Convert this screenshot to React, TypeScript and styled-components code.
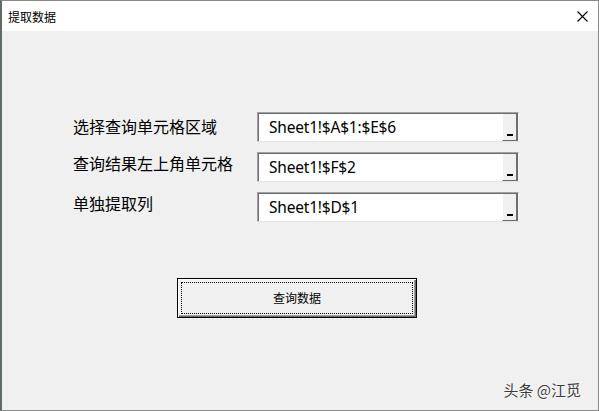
import React from "react";
import styled, { createGlobalStyle } from "styled-components";

const Global = createGlobalStyle`
  html, body { margin: 0; padding: 0; background: #f0f0f0; }
  #root { width: 599px; height: 411px; }
  * { box-sizing: border-box; }
`;

const CJK = `"Noto Sans CJK SC", "Noto Sans", sans-serif`;

const Window = styled.div`
  position: relative;
  width: 599px;
  height: 411px;
  background: #f0f0f0;
  border: 1px solid #8a8a8a;
  border-left: 2px solid #5f6b64;
  display: flex;
  flex-direction: column;
  font-family: ${CJK};
  color: #000;
  overflow: hidden;
`;

const TitleBar = styled.div`
  height: 30px;
  flex: none;
  background: #ffffff;
  display: flex;
  align-items: center;
  justify-content: space-between;
  padding: 0 10px 0 6px;
`;

const Title = styled.span`
  font-size: 12px;
  line-height: 12px;
  margin-top: 1px;
`;

const Close = styled.svg`
  width: 11px;
  height: 11px;
`;

const Body = styled.div`
  flex: 1;
  display: flex;
  flex-direction: column;
  padding: 81px 0 0 71px;
`;

const Form = styled.div`
  display: grid;
  grid-template-columns: 184px 262px;
  row-gap: 10px;
`;

const Label = styled.div<{ $offset: number }>`
  font-size: 16px;
  line-height: 16px;
  padding-top: ${(p) => p.$offset}px;
  white-space: nowrap;
`;

const Field = styled.div`
  height: 30px;
  display: flex;
  background: #ffffff;
  border-top: 1px solid #a0a0a0;
  border-left: 1px solid #a0a0a0;
  border-right: 1px solid #f4f4f4;
  border-bottom: 1px solid #e3e3e3;
  box-shadow: inset 1px 1px 0 #6e6e6e;
`;

const FieldText = styled.div`
  flex: 1;
  font-family: "Noto Sans", "Open Sans", sans-serif;
  font-size: 15.5px;
  line-height: 28px;
  padding-left: 11px;
  color: #000;
  white-space: nowrap;
  letter-spacing: -0.2px;
`;

const DropButton = styled.div`
  width: 16px;
  margin-top: 1px;
  background: #f0f0f0;
  border-left: 1px solid #ffffff;
  border-right: 2px solid #6e6e6e;
  border-bottom: 1px solid #6e6e6e;
  display: flex;
  align-items: flex-end;
  justify-content: center;
  padding-bottom: 4px;
`;

const Dash = styled.span`
  display: block;
  width: 6px;
  height: 2px;
  background: #000;
`;

const ActionButton = styled.button`
  margin: 56px 0 0 104px;
  width: 240px;
  height: 40px;
  padding: 3px;
  background: #f0f0f0;
  border: 1px solid #000;
  box-shadow: inset 1px 1px 0 #ffffff, inset -1px -1px 0 #696969,
    inset -2px -2px 0 #a0a0a0;
  font-family: ${CJK};
  font-size: 12px;
  color: #000;
  display: flex;
  cursor: default;
`;

const Focus = styled.span`
  flex: 1;
  border: 1px dotted #000;
  display: flex;
  align-items: center;
  justify-content: center;
  padding-bottom: 1px;
`;

const Watermark = styled.div`
  position: absolute;
  right: 17px;
  bottom: 12px;
  font-family: ${CJK};
  font-size: 15px;
  line-height: 16px;
  color: #3c3c3c;
  text-shadow: 0 0 1px #ffffff, 0 0 2px #ffffff;
`;

const rows = [
  { label: "选择查询单元格区域", value: "Sheet1!$A$1:$E$6", offset: 6 },
  { label: "查询结果左上角单元格", value: "Sheet1!$F$2", offset: 3 },
  { label: "单独提取列", value: "Sheet1!$D$1", offset: 3 },
];

export default function App() {
  return (
    <>
      <Global />
      <Window>
        <TitleBar>
          <Title>提取数据</Title>
          <Close viewBox="0 0 11 11">
            <path d="M0.5 0.5 L10.5 10.5 M10.5 0.5 L0.5 10.5" stroke="#000" strokeWidth="1.1" fill="none" />
          </Close>
        </TitleBar>
        <Body>
          <Form>
            {rows.map((r) => (
              <React.Fragment key={r.label}>
                <Label $offset={r.offset}>{r.label}</Label>
                <Field>
                  <FieldText>{r.value}</FieldText>
                  <DropButton>
                    <Dash />
                  </DropButton>
                </Field>
              </React.Fragment>
            ))}
          </Form>
          <ActionButton>
            <Focus>查询数据</Focus>
          </ActionButton>
        </Body>
        <Watermark>头条 @江觅</Watermark>
      </Window>
    </>
  );
}
